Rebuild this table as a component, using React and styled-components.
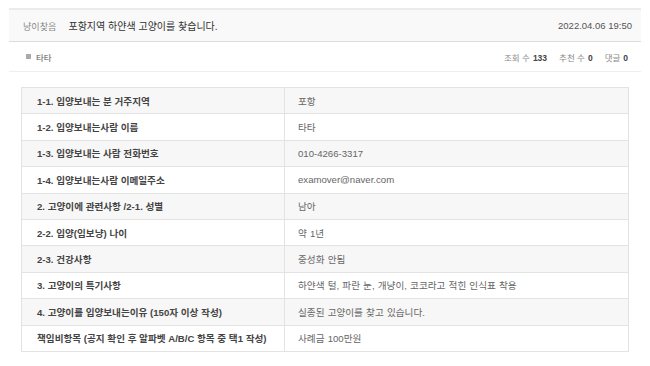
import React from "react";
import styled, { createGlobalStyle } from "styled-components";

const GlobalStyle = createGlobalStyle`
  html, body {
    margin: 0;
    padding: 0;
    background: #fff;
  }
  body {
    font-family: "Liberation Sans", "Noto Sans CJK KR", Arial, sans-serif;
    color: #444;
  }
`;

const Board = styled.article`
  width: 632px;
  margin-left: 9px;
  padding-top: 8px;
`;

const Header = styled.header`
  display: flex;
  align-items: center;
  height: 31px;
  padding: 0 9px 0 14px;
  background: #f9f9f9;
  border-top: 2px solid #ebebeb;
  border-bottom: 1px solid #dcdcdc;
`;

const Category = styled.span`
  font-size: 9.1px;
  color: #888;
  margin-right: 12px;
`;

const Title = styled.h1`
  flex: 1;
  margin: 0;
  font-size: 10px;
  font-weight: 400;
  color: #333;
`;

const Date = styled.span`
  font-size: 9.5px;
  color: #555;
`;

const InfoBar = styled.div`
  display: flex;
  align-items: center;
  height: 29px;
  padding: 0 13px 0 17px;
  border-bottom: 1px solid #efefef;
`;

const Author = styled.span`
  display: flex;
  align-items: center;
  flex: 1;
  font-size: 8.5px;
  color: #555;

  &::before {
    content: "";
    width: 5px;
    height: 5px;
    margin-right: 5px;
    background: #aaa;
  }
`;

const Stats = styled.div`
  display: flex;
  gap: 12px;
  font-size: 8.5px;
  color: #888;
`;

const Stat = styled.span`
  b {
    color: #444;
    font-weight: 700;
    margin-left: 3px;
  }
`;

const Table = styled.table`
  width: 608px;
  margin: 15px 0 0 12px;
  border-collapse: collapse;
  table-layout: fixed;
  border: 1px solid #e3e3e3;
`;

const Row = styled.tr`
  background: ${({ $striped }) => ($striped ? "#f7f7f7" : "#fff")};
`;

const Label = styled.th`
  width: 247px;
  height: 25.4px;
  padding: 0 0 0 15px;
  text-align: left;
  font-size: 9.6px;
  font-weight: 700;
  color: #444;
  border: 1px solid #e3e3e3;
`;

const Value = styled.td`
  padding: 0 0 0 13px;
  font-size: 9.6px;
  word-spacing: 0.5px;
  color: #666;
  border: 1px solid #e3e3e3;
`;

const rows = [
  ["1-1. 입양보내는 분 거주지역", "포항"],
  ["1-2. 입양보내는사람 이름", "타타"],
  ["1-3. 입양보내는 사람 전화번호", "010-4266-3317"],
  ["1-4. 입양보내는사람 이메일주소", "examover@naver.com"],
  ["2. 고양이에 관련사항 /2-1. 성별", "남아"],
  ["2-2. 입양(임보냥) 나이", "약 1년"],
  ["2-3. 건강사항", "중성화 안됨"],
  ["3. 고양이의 특기사항", "하얀색 털, 파란 눈, 개냥이, 코코라고 적힌 인식표 착용"],
  ["4. 고양이를 입양보내는이유 (150자 이상 작성)", "실종된 고양이를 찾고 있습니다."],
  ["책임비항목 (공지 확인 후 알파벳 A/B/C 항목 중 택1 작성)", "사례금 100만원"]
];

const App = () => (
  <>
    <GlobalStyle />
    <Board>
      <Header>
        <Category>냥이찾음</Category>
        <Title>포항지역 하얀색 고양이를 찾습니다.</Title>
        <Date>2022.04.06 19:50</Date>
      </Header>
      <InfoBar>
        <Author>타타</Author>
        <Stats>
          <Stat>
            조회 수<b>133</b>
          </Stat>
          <Stat>
            추천 수<b>0</b>
          </Stat>
          <Stat>
            댓글<b>0</b>
          </Stat>
        </Stats>
      </InfoBar>
      <Table>
        <tbody>
          {rows.map(([label, value], i) => (
            <Row key={label} $striped={i % 2 === 0}>
              <Label>{label}</Label>
              <Value>{value}</Value>
            </Row>
          ))}
        </tbody>
      </Table>
    </Board>
  </>
);

export default App;
